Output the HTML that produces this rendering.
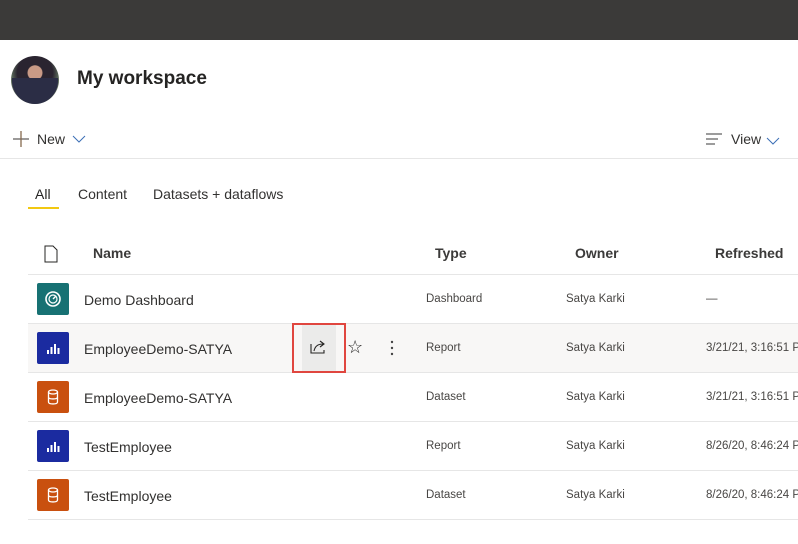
<!DOCTYPE html>
<html><head><meta charset="utf-8"><style>
*{margin:0;padding:0;box-sizing:border-box}
body{width:798px;height:544px;overflow:hidden;background:#fff;font-family:"Liberation Sans",sans-serif;color:#252423;position:relative}
.a,.nm,.sm{position:absolute;white-space:nowrap}
.line{position:absolute;height:1px;background:#e6e6e6}
.ic{position:absolute;left:37px;width:32px;height:32px;border-radius:2px}
.nm{left:84px;font-size:14px;color:#323130}
.sm{font-size:11.5px;color:#484644}
.hd{position:absolute;font-size:14px;font-weight:bold;color:#3b3a39;white-space:nowrap}
</style></head><body>
<div class="a" style="left:0;top:0;width:798px;height:40px;background:#3b3a39"></div>
<div class="a" style="left:11px;top:56px;width:48px;height:48px;border-radius:50%;background:radial-gradient(circle at 50% 35%,#c99a86 0 18%,#2a2430 20% 45%,#5a6a5a 60%,#8a8a7a 100%)"></div>
<div class="a" style="left:12px;top:78px;width:46px;height:26px;border-radius:0 0 23px 23px;background:#2b2d45"></div>
<div class="a" style="left:77px;top:68px;font-size:19px;font-weight:bold;color:#252423">My workspace</div>
<svg class="a" style="left:12px;top:130px" width="18" height="18"><path d="M9 1v16M1 9h16" stroke="#605e5c" stroke-width="1.3"/><path d="M9 1v16" stroke="#c27d3a" stroke-width="0.5"/></svg>
<div class="a" style="left:37px;top:131px;font-size:14px;color:#323130">New</div>
<svg class="a" style="left:72px;top:134px" width="14" height="10"><path d="M1 2l6 6 6-6" stroke="#3c6fb6" fill="none" stroke-width="1"/></svg>
<svg class="a" style="left:706px;top:132px" width="18" height="14"><path d="M0 2h16M0 7h12M0 12h9" stroke="#3a3a3a" stroke-width="1.1"/></svg>
<div class="a" style="left:731px;top:131px;font-size:14px;color:#323130">View</div>
<svg class="a" style="left:766px;top:136px" width="14" height="10"><path d="M1 2l6 6 6-6" stroke="#3c6fb6" fill="none" stroke-width="1"/></svg>
<div class="line" style="left:0;top:158px;width:798px"></div>
<div class="a" style="left:35px;top:186px;font-size:14px;color:#252423">All</div>
<div class="a" style="left:28px;top:207px;width:31px;height:2px;background:#f2c811"></div>
<div class="a" style="left:78px;top:186px;font-size:14px;color:#323130">Content</div>
<div class="a" style="left:153px;top:186px;font-size:14px;color:#323130">Datasets + dataflows</div>
<svg class="a" style="left:44px;top:245px" width="14" height="18"><path d="M1 1h8l4 4v12H1z" fill="none" stroke="#252423" stroke-width="1"/></svg>
<div class="hd" style="left:93px;top:245px">Name</div>
<div class="hd" style="left:435px;top:245px">Type</div>
<div class="hd" style="left:575px;top:245px">Owner</div>
<div class="hd" style="left:715px;top:245px">Refreshed</div>
<div class="line" style="left:28px;top:274px;width:770px"></div>

<div class="a" style="left:28px;top:324px;width:770px;height:48px;background:#f8f7f6"></div>
<div class="line" style="left:28px;top:323px;width:770px"></div>
<div class="line" style="left:28px;top:372px;width:770px"></div>
<div class="line" style="left:28px;top:421px;width:770px"></div>
<div class="line" style="left:28px;top:470px;width:770px"></div>
<div class="line" style="left:28px;top:519px;width:770px"></div>

<div class="ic" style="top:283px;background:#177173"></div>
<svg class="a" style="left:44px;top:290px" width="18" height="18"><circle cx="9" cy="9" r="7" fill="none" stroke="#fff" stroke-width="1.6"/><circle cx="9" cy="9" r="4" fill="none" stroke="#fff" stroke-width="1.2"/><path d="M9 9l3-3" stroke="#fff" stroke-width="1.4"/></svg>
<div class="nm" style="top:292px">Demo Dashboard</div>
<div class="sm" style="left:426px;top:293px">Dashboard</div>
<div class="sm" style="left:566px;top:293px">Satya Karki</div>
<div class="sm" style="left:706px;top:293px">—</div>

<div class="ic" style="top:332px;background:#1b2ba0"></div>
<svg class="a" style="left:44px;top:339px" width="18" height="18"><path d="M3 11h2v4H3zM6.5 8h2v7h-2zM10 5h2v10h-2zM13.5 9h2v6h-2z" fill="#fff"/></svg>
<div class="nm" style="top:341px">EmployeeDemo-SATYA</div>
<div class="a" style="left:302px;top:324px;width:34px;height:48px;background:#ebebea"></div>
<div class="a" style="left:292px;top:323px;width:54px;height:50px;border:2px solid #e0463f"></div>
<svg class="a" style="left:310px;top:339px" width="18" height="16"><path d="M1 5v9h13v-3" fill="none" stroke="#252423" stroke-width="1.1"/><path d="M4 12c1-5 4-7 9-7M10 2l4 3-4 3" fill="none" stroke="#252423" stroke-width="1.1"/></svg>
<div class="a" style="left:347px;top:337px;font-size:18px;color:#252423">☆</div>
<svg class="a" style="left:389px;top:340px" width="6" height="18"><circle cx="3" cy="2" r="1.2" fill="#444"/><circle cx="3" cy="8" r="1.2" fill="#444"/><circle cx="3" cy="14" r="1.2" fill="#444"/></svg>
<div class="sm" style="left:426px;top:342px">Report</div>
<div class="sm" style="left:566px;top:342px">Satya Karki</div>
<div class="sm" style="left:706px;top:342px">3/21/21, 3:16:51 PM</div>

<div class="ic" style="top:381px;background:#c9500f"></div>
<svg class="a" style="left:44px;top:388px" width="18" height="18"><ellipse cx="9" cy="4" rx="4.5" ry="2" fill="none" stroke="#fff" stroke-width="1.3"/><path d="M4.5 4v10c0 2.6 9 2.6 9 0V4M4.5 9c0 2.6 9 2.6 9 0" fill="none" stroke="#fff" stroke-width="1.3"/></svg>
<div class="nm" style="top:390px">EmployeeDemo-SATYA</div>
<div class="sm" style="left:426px;top:391px">Dataset</div>
<div class="sm" style="left:566px;top:391px">Satya Karki</div>
<div class="sm" style="left:706px;top:391px">3/21/21, 3:16:51 PM</div>

<div class="ic" style="top:430px;background:#1b2ba0"></div>
<svg class="a" style="left:44px;top:437px" width="18" height="18"><path d="M3 11h2v4H3zM6.5 8h2v7h-2zM10 5h2v10h-2zM13.5 9h2v6h-2z" fill="#fff"/></svg>
<div class="nm" style="top:439px">TestEmployee</div>
<div class="sm" style="left:426px;top:440px">Report</div>
<div class="sm" style="left:566px;top:440px">Satya Karki</div>
<div class="sm" style="left:706px;top:440px">8/26/20, 8:46:24 PM</div>

<div class="ic" style="top:479px;background:#c9500f"></div>
<svg class="a" style="left:44px;top:486px" width="18" height="18"><ellipse cx="9" cy="4" rx="4.5" ry="2" fill="none" stroke="#fff" stroke-width="1.3"/><path d="M4.5 4v10c0 2.6 9 2.6 9 0V4M4.5 9c0 2.6 9 2.6 9 0" fill="none" stroke="#fff" stroke-width="1.3"/></svg>
<div class="nm" style="top:488px">TestEmployee</div>
<div class="sm" style="left:426px;top:489px">Dataset</div>
<div class="sm" style="left:566px;top:489px">Satya Karki</div>
<div class="sm" style="left:706px;top:489px">8/26/20, 8:46:24 PM</div>
</body></html>
